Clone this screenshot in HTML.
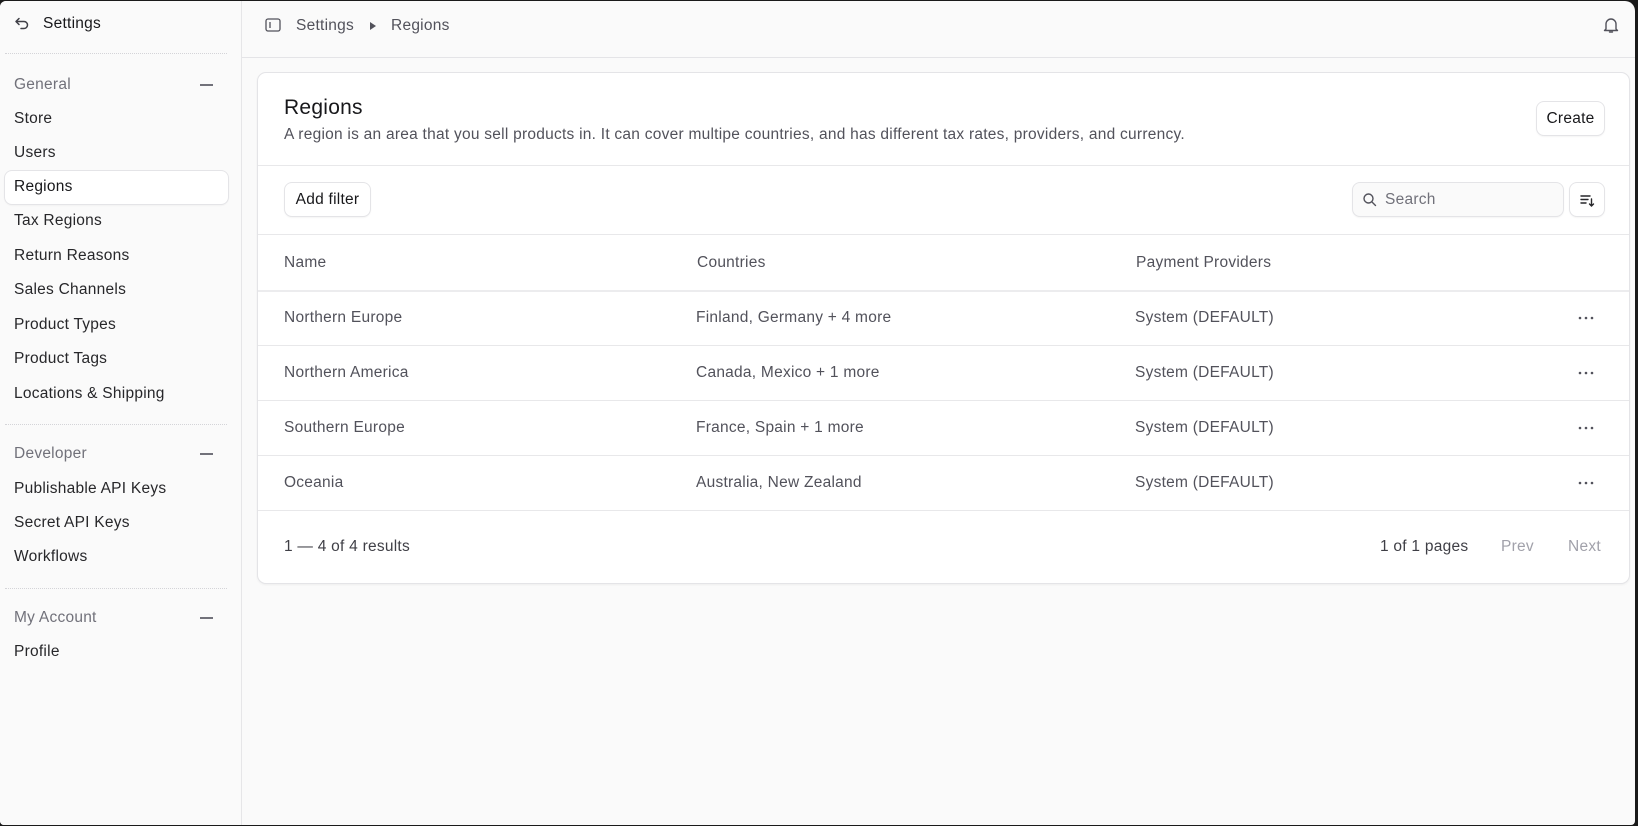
<!DOCTYPE html>
<html><head><meta charset="utf-8"><style>
*{box-sizing:border-box;margin:0;padding:0}
body{width:1638px;height:826px;background:#1a1a1a;font-family:"Liberation Sans",sans-serif;overflow:hidden;position:relative}
.win{position:absolute;left:0;top:1px;width:1635px;height:824px;background:#fafafa;border-radius:6px 10px 4px 4px;overflow:hidden}
.sb{position:absolute;left:0;top:0;width:242px;height:100%;border-right:1px solid #e6e6e8;background:#fafafa}
.t{position:absolute;font-size:15.5px;letter-spacing:.25px;color:#27272a;white-space:nowrap;line-height:18px}
.g{color:#71717a}
.dot{position:absolute;left:5px;width:222px;border-top:1px dotted #d4d4d8}
.minus{position:absolute;left:200px;width:13px;height:2px;background:#71717a}
.sel{position:absolute;left:5px;top:170px;width:223px;height:33px;background:#fff;border-radius:7px;box-shadow:0 0 0 1px #e4e4e7,0 1px 2px rgba(0,0,0,.08)}
.top{position:absolute;left:242px;top:0;right:0;height:57px;border-bottom:1px solid #e4e4e7}
.card{position:absolute;left:257px;top:71px;width:1373px;height:512px;background:#fff;border:1px solid #e4e4e7;border-radius:9px;box-shadow:0 1px 2px rgba(0,0,0,.05)}
.hl{position:absolute;left:0;right:0;border-top:1px solid #e8e8ea}
.btn{position:absolute;background:#fff;border-radius:7px;box-shadow:0 0 0 1px #e4e4e7,0 1px 2px rgba(0,0,0,.1);font-size:15.5px;letter-spacing:.25px;color:#18181b;display:flex;align-items:center;justify-content:center}
.c{position:absolute;font-size:15.5px;letter-spacing:.25px;color:#52525b;white-space:nowrap;line-height:18px}
.dots{position:absolute;left:1320px;width:16px;height:4px}
</style></head><body>
<div class="win">
<div class="sb">
<svg style="position:absolute;left:14px;top:15px" width="16" height="16" viewBox="0 0 16 16" fill="none" stroke="#3f3f46" stroke-width="1.5" stroke-linecap="round" stroke-linejoin="round"><path d="M5 2.5L2 5.5 5 8.5"/><path d="M2.5 5.5H10a3.5 3.5 0 010 7H7"/></svg>
<div class="t" style="left:43px;top:14px;color:#18181b">Settings</div>
<div class="dot" style="top:52px"></div>
<div class="t g" style="left:14px;top:75px">General</div><div class="minus" style="top:83px"></div>
<div class="t" style="left:14px;top:109px">Store</div>
<div class="t" style="left:14px;top:143px">Users</div>
<div class="sel"></div>
<div class="t" style="left:14px;top:177px;color:#18181b">Regions</div>
<div class="t" style="left:14px;top:211px">Tax Regions</div>
<div class="t" style="left:14px;top:246px">Return Reasons</div>
<div class="t" style="left:14px;top:280px">Sales Channels</div>
<div class="t" style="left:14px;top:315px">Product Types</div>
<div class="t" style="left:14px;top:349px">Product Tags</div>
<div class="t" style="left:14px;top:384px">Locations &amp; Shipping</div>
<div class="dot" style="top:423px"></div>
<div class="t g" style="left:14px;top:444px">Developer</div><div class="minus" style="top:452px"></div>
<div class="t" style="left:14px;top:479px">Publishable API Keys</div>
<div class="t" style="left:14px;top:513px">Secret API Keys</div>
<div class="t" style="left:14px;top:547px">Workflows</div>
<div class="dot" style="top:587px"></div>
<div class="t g" style="left:14px;top:608px">My Account</div><div class="minus" style="top:616px"></div>
<div class="t" style="left:14px;top:642px">Profile</div>
</div>
<div class="top">
<svg style="position:absolute;left:23px;top:16px" width="16" height="16" viewBox="0 0 16 16" fill="none" stroke="#52525b" stroke-width="1.3"><rect x="1" y="2" width="14" height="12" rx="2"/><path d="M5 5v6"/></svg>
<div class="t g" style="left:54px;top:16px;color:#52525b">Settings</div>
<svg style="position:absolute;left:127px;top:20px" width="8" height="10" viewBox="0 0 8 10"><path d="M1 1L7 5 1 9z" fill="#52525b"/></svg>
<div class="t" style="left:149px;top:16px;color:#52525b">Regions</div>
<svg style="position:absolute;left:1360px;top:15px" width="18" height="18" viewBox="0 0 18 18" fill="none" stroke="#52525b" stroke-width="1.4" stroke-linejoin="round"><path d="M4 13V8a5 5 0 0110 0v5l1.5 1.5h-13z"/><path d="M7.5 16h3" stroke-linecap="round"/></svg>
</div>
<div class="card">
<div class="t" style="left:26px;top:23px;font-size:21px;line-height:24px;color:#18181b">Regions</div>
<div class="c" style="left:26px;top:53px">A region is an area that you sell products in. It can cover multipe countries, and has different tax rates, providers, and currency.</div>
<div class="btn" style="left:1279px;top:29px;width:67px;height:33px">Create</div>
<div class="hl" style="top:92px"></div>
<div class="btn" style="left:27px;top:110px;width:85px;height:33px">Add filter</div>
<div class="btn" style="left:1095px;top:110px;width:210px;height:33px;background:#fafafa;justify-content:flex-start;padding-left:32px;color:#71717a">Search
<svg style="position:absolute;left:9px;top:9px" width="15" height="15" viewBox="0 0 15 15" fill="none" stroke="#52525b" stroke-width="1.4"><circle cx="6.5" cy="6.5" r="4.5"/><path d="M10 10l3.5 3.5" stroke-linecap="round"/></svg></div>
<div class="btn" style="left:1312px;top:110px;width:34px;height:33px"><svg width="16" height="16" viewBox="0 0 16 16" fill="none" stroke="#27272a" stroke-width="1.4" stroke-linecap="round"><path d="M2 4h9M2 7.5h7M2 11h5M12.5 7v7M10.5 12l2 2 2-2"/></svg></div>
<div class="hl" style="top:161px"></div>
<div class="c" style="left:26px;top:181px">Name</div>
<div class="c" style="left:439px;top:181px">Countries</div>
<div class="c" style="left:878px;top:181px">Payment Providers</div>
<div class="hl" style="top:217px;border-top:2px solid #ececee"></div>
<div class="c" style="left:26px;top:236px">Northern Europe</div><div class="c" style="left:438px;top:236px">Finland, Germany + 4 more</div><div class="c" style="left:877px;top:236px">System (DEFAULT)</div>
<svg class="dots" style="top:243px" viewBox="0 0 16 4"><circle cx="2" cy="2" r="1.3" fill="#52525b"/><circle cx="8" cy="2" r="1.3" fill="#52525b"/><circle cx="14" cy="2" r="1.3" fill="#52525b"/></svg>
<div class="hl" style="top:272px"></div>
<div class="c" style="left:26px;top:291px">Northern America</div><div class="c" style="left:438px;top:291px">Canada, Mexico + 1 more</div><div class="c" style="left:877px;top:291px">System (DEFAULT)</div>
<svg class="dots" style="top:298px" viewBox="0 0 16 4"><circle cx="2" cy="2" r="1.3" fill="#52525b"/><circle cx="8" cy="2" r="1.3" fill="#52525b"/><circle cx="14" cy="2" r="1.3" fill="#52525b"/></svg>
<div class="hl" style="top:327px"></div>
<div class="c" style="left:26px;top:346px">Southern Europe</div><div class="c" style="left:438px;top:346px">France, Spain + 1 more</div><div class="c" style="left:877px;top:346px">System (DEFAULT)</div>
<svg class="dots" style="top:353px" viewBox="0 0 16 4"><circle cx="2" cy="2" r="1.3" fill="#52525b"/><circle cx="8" cy="2" r="1.3" fill="#52525b"/><circle cx="14" cy="2" r="1.3" fill="#52525b"/></svg>
<div class="hl" style="top:382px"></div>
<div class="c" style="left:26px;top:401px">Oceania</div><div class="c" style="left:438px;top:401px">Australia, New Zealand</div><div class="c" style="left:877px;top:401px">System (DEFAULT)</div>
<svg class="dots" style="top:408px" viewBox="0 0 16 4"><circle cx="2" cy="2" r="1.3" fill="#52525b"/><circle cx="8" cy="2" r="1.3" fill="#52525b"/><circle cx="14" cy="2" r="1.3" fill="#52525b"/></svg>
<div class="hl" style="top:437px"></div>
<div class="c" style="left:26px;top:465px;color:#3f3f46">1 — 4 of 4 results</div>
<div class="c" style="left:1122px;top:465px;color:#3f3f46">1 of 1 pages</div>
<div class="c" style="left:1243px;top:465px;color:#a1a1aa">Prev</div>
<div class="c" style="left:1310px;top:465px;color:#a1a1aa">Next</div>
</div>
</div>
</body></html>
